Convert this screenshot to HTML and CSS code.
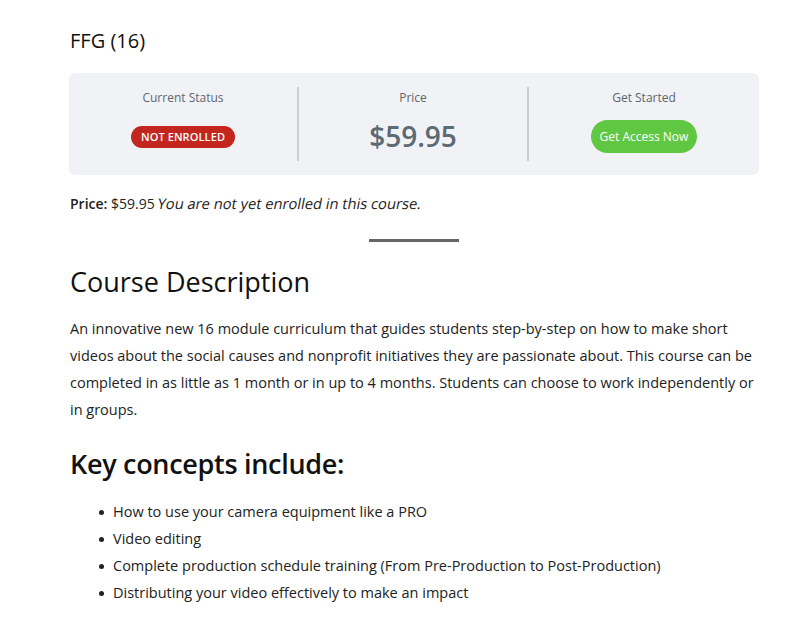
FILE: index.html
```html
<!DOCTYPE html>
<html>
<head>
<meta charset="utf-8">
<link rel="stylesheet" href="styles.css">
</head>
<body>
<main class="page">
  <h2 class="course-title">FFG (16)</h2>
  <div class="status-box">
    <div class="status-col">
      <div class="status-label">Current Status</div>
      <div class="status-value"><span class="badge">NOT ENROLLED</span></div>
    </div>
    <div class="status-col">
      <div class="status-label">Price</div>
      <div class="status-value"><span class="price">$59.95</span></div>
    </div>
    <div class="status-col">
      <div class="status-label">Get Started</div>
      <div class="status-value"><a class="btn">Get Access Now</a></div>
    </div>
  </div>
  <p class="price-line"><strong>Price:</strong> $59.95 <em class="slant">You are not yet enrolled in this course.</em></p>
  <div class="sep"></div>
  <h2 class="desc-title">Course Description</h2>
  <p class="desc">An innovative new 16 module curriculum that guides students step-by-step on how to make short videos about the social causes and nonprofit initiatives they are passionate about. This course can be completed in as little as 1 month or in up to 4 months. Students can choose to work independently or in groups.</p>
  <h3 class="key-title">Key concepts include:</h3>
  <ul class="concepts">
    <li>How to use your camera equipment like a PRO</li>
    <li>Video editing</li>
    <li>Complete production schedule training (From Pre-Production to Post-Production)</li>
    <li>Distributing your video effectively to make an impact</li>
  </ul>
</main>
</body>
</html>
```
FILE: styles.css
```css
html, body {
  margin: 0;
  padding: 0;
  background: #fff;
}
body {
  font-family: "Open Sans", "Liberation Sans", sans-serif;
  color: #222;
}
.page {
  width: 690px;
  margin: 0 0 0 69px;
  padding-top: 27px;
}
.course-title {
  font-size: 20px;
  font-weight: 400;
  margin: 0 0 0 1px;
  line-height: 28px;
  color: #111;
}
.status-box {
  margin-top: 18px;
  background: #f1f2f6;
  border-radius: 6px;
  display: grid;
  grid-template-columns: 1fr 1fr 1fr;
  padding: 14px 0;
  height: 74px;
}
.status-col {
  text-align: center;
  border-right: 2px solid #c9cdd1;
}
.status-col:last-child {
  border-right: none;
}
.status-label {
  font-size: 12px;
  color: #5d666e;
  line-height: 16px;
  margin-top: 3px;
}
.status-value {
  height: 50px;
  display: flex;
  align-items: center;
  justify-content: center;
  padding-top: 5px;
}
.badge {
  background: #c3261e;
  color: #fff;
  font-size: 11px;
  font-weight: 600;
  border-radius: 12px;
  padding: 0 10px;
  height: 22px;
  line-height: 22px;
  display: inline-block;
  letter-spacing: 0.1px;
  position: relative;
  top: 1px;
}
.price {
  font-size: 28px;
  color: #5c6a72;
  line-height: 36px;
  font-weight: 600;
}
.btn {
  background: #5fc741;
  color: #fff;
  font-size: 12px;
  font-weight: 500;
  border-radius: 17px;
  padding: 0 8.5px;
  height: 33px;
  line-height: 33px;
  display: inline-block;
}
.price-line {
  font-size: 14px;
  margin: 17px 0 0 1px;
  line-height: 22px;
  color: #222;
}
.price-line strong {
  font-weight: 600;
}
.slant {
  font-style: normal;
  font-size: 14.7px;
  display: inline-block;
  transform: skewX(-11deg);
}
.sep {
  width: 90px;
  height: 3px;
  background: #666;
  margin: 24px auto 0;
}
.desc-title {
  font-size: 27px;
  font-weight: 400;
  margin: 22px 0 0 1px;
  line-height: 36px;
  color: #111;
}
.desc {
  font-size: 14.5px;
  line-height: 27px;
  margin: 15px 0 0 1px;
  color: #222;
}
.key-title {
  font-size: 27px;
  font-weight: 600;
  margin: 21px 0 0 1px;
  line-height: 40px;
  color: #111;
  letter-spacing: -0.3px;
}
.concepts {
  list-style: none;
  margin: 14px 0 0 1px;
  padding-left: 43px;
  font-size: 14.5px;
  line-height: 27px;
  color: #222;
}
.concepts li::before {
  content: "";
  display: inline-block;
  width: 5px;
  height: 5px;
  border-radius: 50%;
  background: #222;
  margin-left: -14px;
  margin-right: 9px;
  vertical-align: middle;
  position: relative;
  top: -1px;
}
```
